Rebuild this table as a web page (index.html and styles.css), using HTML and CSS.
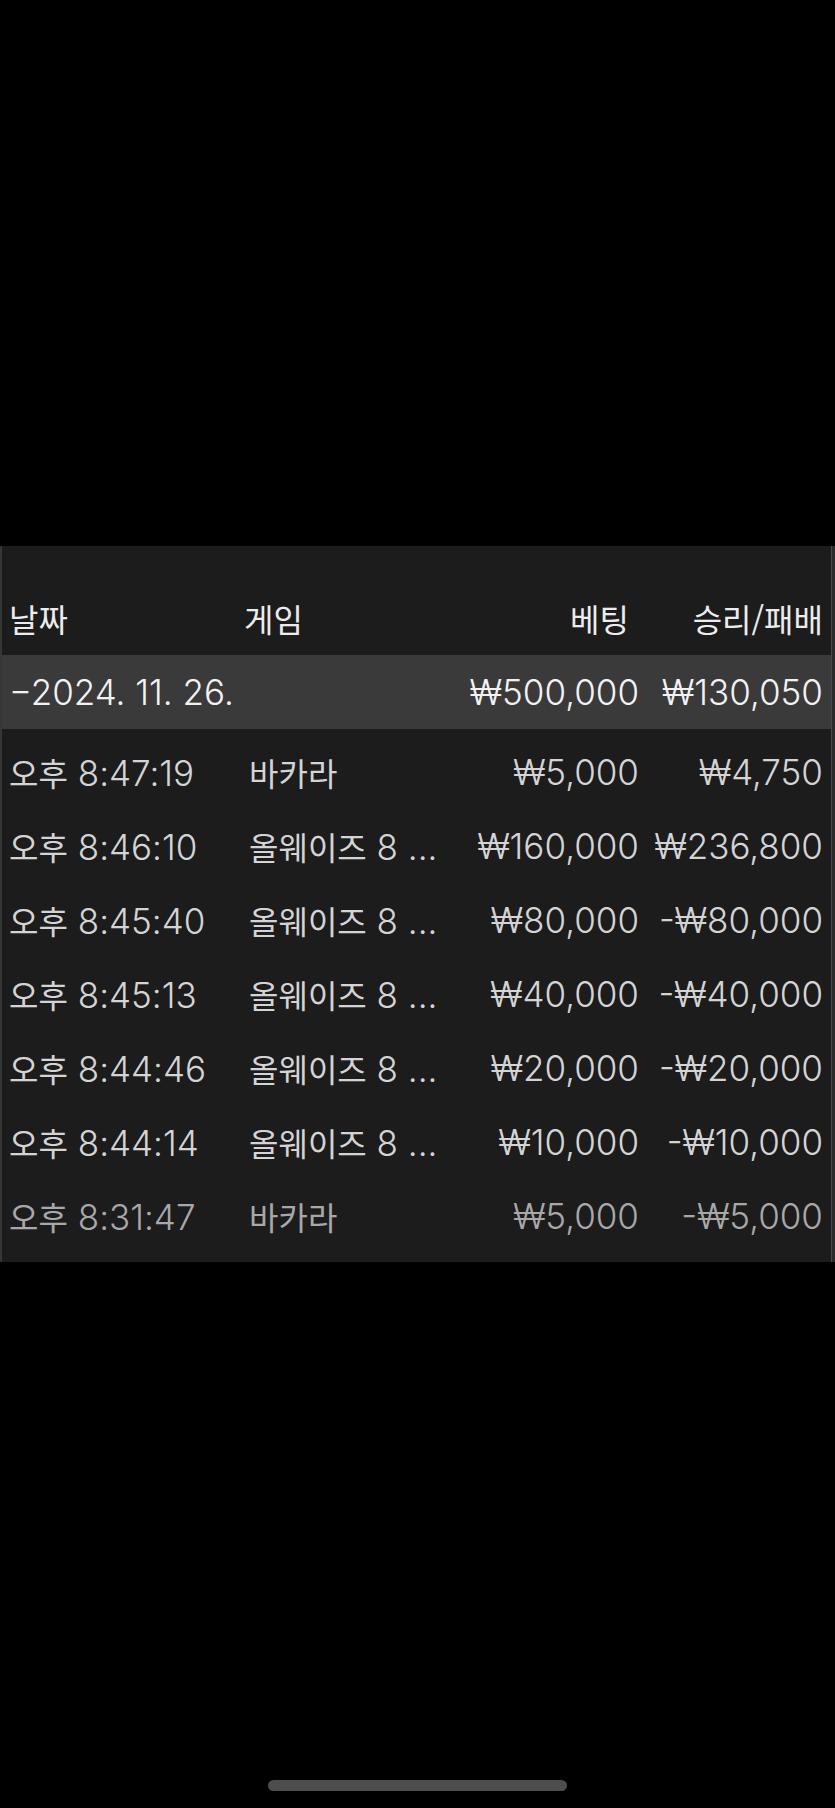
FILE: index.html
```html
<!DOCTYPE html>
<html lang="ko">
<head>
  <meta charset="UTF-8">
  <meta name="viewport" content="width=device-width, initial-scale=1.0">
  <title>베팅 내역</title>
  <link rel="stylesheet" href="styles.css">
</head>
<body>
  <div class="screen">
    <!-- Bet history panel -->
    <div class="panel">
      <div class="row head-row">
        <div class="cell"><span class="ko">날짜</span></div>
        <div class="cell head-game"><span class="ko">게임</span></div>
        <div class="cell num head-bet"><span class="ko">베팅</span></div>
        <div class="cell num"><span class="ko">승리/패배</span></div>
      </div>

      <div class="row day-row">
        <div class="cell">&minus;2024. 11. 26.</div>
        <div class="cell"></div>
        <div class="cell num">₩500,000</div>
        <div class="cell num">₩130,050</div>
      </div>

      <div class="list">
        <div class="row item-row">
          <div class="cell"><span class="ko">오후</span> 8:47:19</div>
          <div class="cell"><span class="ko">바카라</span></div>
          <div class="cell num">₩5,000</div>
          <div class="cell num">₩4,750</div>
        </div>
        <div class="row item-row">
          <div class="cell"><span class="ko">오후</span> 8:46:10</div>
          <div class="cell"><span class="ko">올웨이즈</span> 8 ...</div>
          <div class="cell num">₩160,000</div>
          <div class="cell num">₩236,800</div>
        </div>
        <div class="row item-row">
          <div class="cell"><span class="ko">오후</span> 8:45:40</div>
          <div class="cell"><span class="ko">올웨이즈</span> 8 ...</div>
          <div class="cell num">₩80,000</div>
          <div class="cell num">-₩80,000</div>
        </div>
        <div class="row item-row">
          <div class="cell"><span class="ko">오후</span> 8:45:13</div>
          <div class="cell"><span class="ko">올웨이즈</span> 8 ...</div>
          <div class="cell num">₩40,000</div>
          <div class="cell num">-₩40,000</div>
        </div>
        <div class="row item-row">
          <div class="cell"><span class="ko">오후</span> 8:44:46</div>
          <div class="cell"><span class="ko">올웨이즈</span> 8 ...</div>
          <div class="cell num">₩20,000</div>
          <div class="cell num">-₩20,000</div>
        </div>
        <div class="row item-row">
          <div class="cell"><span class="ko">오후</span> 8:44:14</div>
          <div class="cell"><span class="ko">올웨이즈</span> 8 ...</div>
          <div class="cell num">₩10,000</div>
          <div class="cell num">-₩10,000</div>
        </div>
        <div class="row item-row faded">
          <div class="cell"><span class="ko">오후</span> 8:31:47</div>
          <div class="cell"><span class="ko">바카라</span></div>
          <div class="cell num">₩5,000</div>
          <div class="cell num">-₩5,000</div>
        </div>
      </div>
    </div>

    <div class="home-bar"></div>
  </div>
</body>
</html>
```

FILE: styles.css
```css
/* Global */
body {
  margin: 0;
  background-color: #000;
  font-family: Inter, "Noto Sans CJK KR", sans-serif;
  font-weight: 300;
  color: #d4d4d4;
}

.screen {
  height: 1808px;
  padding-top: 546px;
  box-sizing: border-box;
  display: flex;
  flex-direction: column;
}

/* Panel */
.panel {
  background-color: #1c1c1c;
  border-left: 2px solid #363636;
  border-right: 3px solid #2b2b2b;
  box-shadow: inset -1px 0 0 #4a4a4a;
}

.row {
  display: grid;
  grid-template-columns: 240px 190px 200px 184px;
  padding: 0 7px 0 7px;
  align-items: center;
  font-size: 35px;
  white-space: nowrap;
}

.cell {
  overflow: hidden;
}

.num {
  text-align: right;
}

.ko {
  font-family: "Noto Sans CJK KR", sans-serif;
  font-weight: 400;
  font-size: 32px;
}

/* Header row */
.head-row {
  height: 59px;
  padding-top: 42px;
  padding-bottom: 8px;
  color: #ececec;
}

.head-game {
  margin-left: -5px;
}

.head-bet {
  padding-right: 10px;
}

/* Day total row */
.day-row {
  height: 74px;
  background-color: #3a3a3a;
  color: #f2f2f2;
  margin-right: 1px;
}

/* Item rows */
.list {
  padding: 6px 0 9px;
}

.item-row {
  height: 74px;
}

.faded {
  color: #a8a8a8;
}

/* iOS home indicator */
.home-bar {
  width: 299px;
  height: 11px;
  border-radius: 6px;
  background-color: #4d4d4d;
  margin: auto auto 17px;
}
```
